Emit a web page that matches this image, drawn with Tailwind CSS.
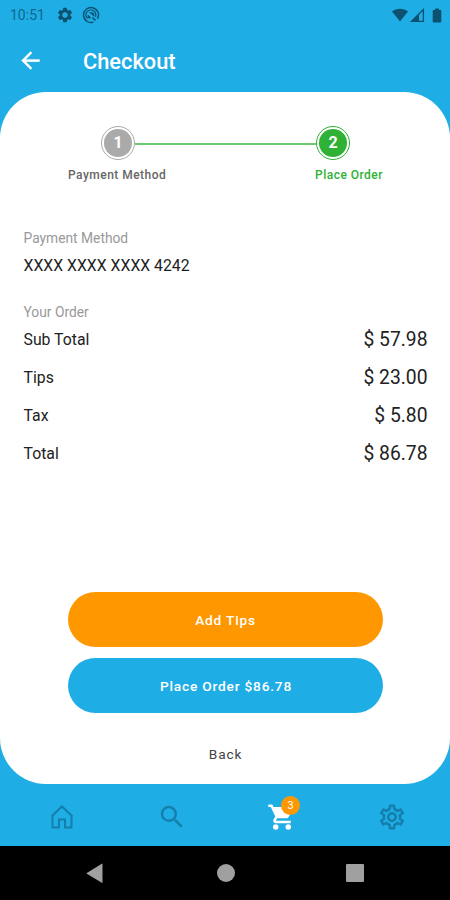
<!DOCTYPE html>
<html lang="en">
<head>
<meta charset="utf-8">
<meta name="viewport" content="width=device-width, initial-scale=1">
<title>Checkout</title>
<script src="https://cdn.jsdelivr.net/npm/@tailwindcss/browser@4"></script>
</head>
<body class="font-[Roboto,sans-serif] bg-black">
<div class="w-[450px] h-[900px] flex flex-col bg-[#1fade6] overflow-hidden">
  <!-- Status bar -->
  <div class="h-[30px] shrink-0 flex items-center pl-[10px] pr-[8px] text-[#0b5270]">
    <span class="text-[14px] leading-[30px] w-[45px] text-[#10678c]">10:51</span>
    <svg class="w-[18px] h-[18px] ml-[1px]" viewBox="0 0 24 24" fill="currentColor"><path d="M19.14 12.94c.04-.3.06-.61.06-.94 0-.32-.02-.64-.07-.94l2.03-1.58a.49.49 0 0 0 .12-.61l-1.92-3.32a.488.488 0 0 0-.59-.22l-2.39.96c-.5-.38-1.03-.7-1.62-.94l-.36-2.54a.484.484 0 0 0-.48-.41h-3.84c-.24 0-.43.17-.47.41l-.36 2.54c-.59.24-1.13.57-1.62.94l-2.39-.96c-.22-.08-.47 0-.59.22L2.74 8.87c-.12.21-.08.47.12.61l2.03 1.58c-.05.3-.09.63-.09.94s.02.64.07.94l-2.03 1.58a.49.49 0 0 0-.12.61l1.92 3.32c.12.22.37.29.59.22l2.39-.96c.5.38 1.03.7 1.62.94l.36 2.54c.05.24.24.41.48.41h3.84c.24 0 .44-.17.47-.41l.36-2.54c.59-.24 1.13-.56 1.62-.94l2.39.96c.22.08.47 0 .59-.22l1.92-3.32c.12-.22.07-.47-.12-.61l-2.01-1.58zM12 15.6A3.6 3.6 0 1 1 12 8.4a3.6 3.6 0 0 1 0 7.2z"/></svg>
    <svg class="w-[18px] h-[18px] ml-[8px]" viewBox="0 0 18 18" fill="none" stroke="currentColor" stroke-width="1.4"><path d="M11.500 16.100A7.500 7.500 0 1 1 15.500 12.800"/><path d="M5.400 12.600A5 5 0 0 1 5.200 5.600A5 5 0 0 1 13.800 8.500V11" stroke-width="1.200"/><path d="M7 6.300h2.500c1.700 0 2.800 1.200 2.800 2.800v1.700z" fill="currentColor" stroke="none"/><path d="M6 9.300v2.500h2.800z" fill="currentColor" stroke-width="1"/><path d="M10.500 11.500l3 3" stroke-width="1.600"/></svg>
    <div class="flex-1"></div>
    <svg class="w-[18px] h-[14px]" viewBox="0 0 18 14" fill="currentColor"><path d="M1 3.600C5.500-.2 12.500-.2 17 3.600L9 13.500z"/></svg>
    <svg class="w-[15px] h-[15px] ml-[1px]" viewBox="0 0 15 15"><path d="M1.600 13.300L13.400 1.500V13.300z" fill="none" stroke="currentColor" stroke-width="1.300"/><path d="M1 13.900L9 6v7.900z" fill="currentColor"/></svg>
    <svg class="w-[10px] h-[15px] ml-[7px]" viewBox="0 0 10 15" fill="currentColor"><path d="M3 .5h4V2h1.400c.5 0 .9.400.9.900v10.700c0 .5-.4.900-.9.900H1.600c-.5 0-.9-.4-.9-.9V2.900c0-.5.4-.9.9-.9H3z"/></svg>
  </div>
  <!-- App header -->
  <header class="h-[62px] shrink-0 flex items-center pl-[17px]">
    <svg class="w-[27px] h-[27px] -mt-[2px]" viewBox="0 0 24 24" fill="white" stroke="white" stroke-width=".3"><path d="M20 11H7.830l5.590-5.590L12 4l-8 8 8 8 1.410-1.410L7.830 13H20v-2z"/></svg>
    <h1 class="ml-[39px] mt-[1px] text-white text-[21.800px] leading-[28px] font-medium">Checkout</h1>
  </header>
  <!-- Content card -->
  <main class="h-[692px] shrink-0 bg-white rounded-[46px] flex flex-col">
    <div class="pt-[34px] pl-[101px] pr-[100px] flex items-center">
      <div class="size-[34px] rounded-full border border-[#aaa] flex items-center justify-center shrink-0"><span class="size-[28px] rounded-full bg-[#aaa] text-white text-[16px] font-bold leading-[28px] text-center">1</span></div>
      <div class="flex-1 h-[2px] mt-[1px] bg-[#6bcb6e]"></div>
      <div class="size-[34px] rounded-full border border-[#2eb135] flex items-center justify-center shrink-0"><span class="size-[28px] rounded-full bg-[#2eb135] text-white text-[16px] font-bold leading-[28px] text-center">2</span></div>
    </div>
    <div class="mt-[7px] pl-[68px] pr-[67px] flex justify-between text-[12px] leading-[16px] font-medium tracking-[0.480px]">
      <span class="text-[#666]">Payment Method</span>
      <span class="text-[#2eb135]">Place Order</span>
    </div>
    <section class="mt-[46px] pl-[23.500px]">
      <p class="text-[13.800px] leading-[18px] text-[#999]">Payment Method</p>
      <p class="mt-[9px] text-[15.800px] leading-[20px] text-[#222]">XXXX XXXX XXXX 4242</p>
    </section>
    <section class="mt-[27px] pl-[23.500px] pr-[22.500px] text-[#222]">
      <p class="text-[13.800px] leading-[18px] text-[#999]">Your Order</p>
      <div class="flex justify-between items-center h-[38px] -mt-[1px]"><span class="text-[15.800px] pt-[2px]">Sub Total</span><span class="text-[19.300px] pt-[2px]">$ 57.98</span></div>
      <div class="flex justify-between items-center h-[38px]"><span class="text-[15.800px] pt-[2px]">Tips</span><span class="text-[19.300px] pt-[2px]">$ 23.00</span></div>
      <div class="flex justify-between items-center h-[38px]"><span class="text-[15.800px] pt-[2px]">Tax</span><span class="text-[19.300px] pt-[2px]">$ 5.80</span></div>
      <div class="flex justify-between items-center h-[38px]"><span class="text-[15.800px] pt-[2px]">Total</span><span class="text-[19.300px] pt-[2px]">$ 86.78</span></div>
    </section>
    <div class="mt-auto pl-[68px] pr-[67px] flex flex-col text-[13.700px] font-medium tracking-[0.800px]">
      <button class="h-[55px] pt-[2px] rounded-full bg-[#ff9800] text-white">Add Tips</button>
      <button class="mt-[11px] h-[55px] pt-[2px] pl-[1px] rounded-full bg-[#1fade6] text-white">Place Order $86.78</button>
      <button class="mt-[31px] mb-[19px] h-[21px] text-[#444] font-normal">Back</button>
    </div>
  </main>
  <!-- Tab bar -->
  <nav class="h-[62px] shrink-0 grid grid-cols-4 pl-[7px] pr-[3px] pt-[4px] items-center justify-items-center text-[#147fab]">
    <svg class="w-[24px] h-[26px]" viewBox="0 0 24 26" fill="none" stroke="currentColor" stroke-width="2"><path d="M2.500 11.500V23.500h6.500v-8h6v8h6.500V11.500M1.500 12.500L12 2.500l10.500 10"/></svg>
    <svg class="w-[30px] h-[30px]" viewBox="0 0 24 24" fill="currentColor"><path d="M15.500 14h-.79l-.28-.27A6.471 6.471 0 0 0 16 9.500 6.500 6.500 0 1 0 9.500 16c1.610 0 3.090-.59 4.230-1.570l.27.28v.79l5 4.990L20.490 19l-4.990-5zm-6 0C7.010 14 5 11.990 5 9.500S7.010 5 9.500 5 14 7.010 14 9.500 11.990 14 9.500 14z"/></svg>
    <div class="relative size-[30px]">
      <svg class="size-[30px]" viewBox="0 0 24 24"><path fill="white" d="M1 2v2h2l3.600 7.590-1.350 2.450c-.16.28-.25.61-.25.96 0 1.100.9 2 2 2h12v-2H7.420c-.14 0-.25-.11-.25-.25l.03-.12.9-1.630h7.450c.75 0 1.410-.41 1.750-1.030l3.580-6.490A1.003 1.003 0 0 0 20 4H5.210l-.94-2H1z"/><circle cx="7" cy="20" r="2.200" fill="white"/><circle cx="17" cy="20" r="2.200" fill="white"/></svg>
      <span class="absolute left-[14px] -top-[6px] size-[19px] rounded-full bg-[#ff9800] text-white text-[11px] leading-[19px] text-center">3</span>
    </div>
    <svg class="w-[30px] h-[30px]" viewBox="0 0 24 24" fill="currentColor"><path d="M19.430 12.980c.04-.32.07-.64.07-.98 0-.34-.03-.66-.07-.98l2.110-1.650c.19-.15.24-.42.12-.64l-2-3.460a.5.5 0 0 0-.61-.22l-2.490 1c-.52-.4-1.080-.73-1.690-.98l-.38-2.650A.488.488 0 0 0 14 2h-4c-.25 0-.46.18-.49.42l-.38 2.650c-.61.25-1.170.59-1.690.98l-2.490-1a.5.5 0 0 0-.61.22l-2 3.460c-.13.22-.07.49.12.64l2.110 1.650c-.04.32-.07.65-.07.98s.03.66.07.98l-2.110 1.650c-.19.15-.24.42-.12.64l2 3.460a.5.5 0 0 0 .61.22l2.490-1c.52.4 1.080.73 1.690.98l.38 2.650c.03.24.24.42.49.42h4c.25 0 .46-.18.49-.42l.38-2.650c.61-.25 1.170-.59 1.690-.98l2.490 1a.5.5 0 0 0 .61-.22l2-3.460c.12-.22.07-.49-.12-.64l-2.110-1.650zm-1.980-1.710c.04.31.05.52.05.73 0 .21-.02.43-.05.73l-.14 1.130.89.7 1.080.84-.7 1.210-1.270-.51-1.040-.42-.9.68c-.43.32-.84.56-1.250.73l-1.060.43-.16 1.130-.2 1.350h-1.400l-.19-1.350-.16-1.130-1.060-.43c-.43-.18-.83-.41-1.230-.71l-.91-.7-1.060.43-1.270.51-.7-1.210 1.080-.84.89-.7-.14-1.130c-.03-.31-.05-.54-.05-.74s.02-.43.05-.73l.14-1.130-.89-.7-1.080-.84.7-1.210 1.270.51 1.040.42.9-.68c.43-.32.84-.56 1.250-.73l1.060-.43.16-1.130.2-1.350h1.390l.19 1.350.16 1.130 1.060.43c.43.18.83.41 1.230.71l.91.7 1.060-.43 1.270-.51.7 1.210-1.070.85-.89.7.14 1.130zM12 8c-2.210 0-4 1.790-4 4s1.790 4 4 4 4-1.790 4-4-1.790-4-4-4zm0 6c-1.100 0-2-.9-2-2s.9-2 2-2 2 .9 2 2-.9 2-2 2z"/></svg>
  </nav>
  <!-- System navigation -->
  <div class="h-[54px] shrink-0 bg-black flex items-center justify-between pl-[86px] pr-[86px] text-[#a0a0a0]">
    <svg class="w-[17px] h-[20px]" viewBox="0 0 17 20" fill="currentColor"><path d="M16.500 1v18.500q0 .7-.7.300L.8 10.700q-.7-.4 0-.8L15.800.7q.7-.4.700.3z"/></svg>
    <div class="size-[18px] rounded-full bg-[#a0a0a0] ml-[2px]"></div>
    <div class="size-[18px] rounded-[1px] bg-[#a0a0a0]"></div>
  </div>
</div>
</body>
</html>
